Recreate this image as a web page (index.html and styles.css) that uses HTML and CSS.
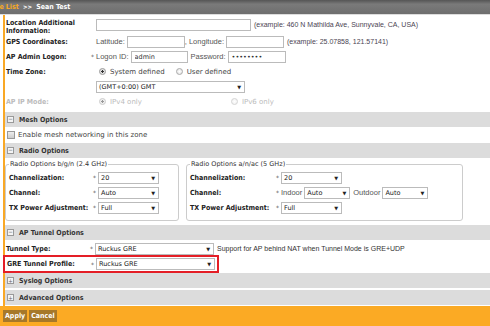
FILE: index.html
```html
<!DOCTYPE html>
<html lang="en">
	<head>
		<meta charset="UTF-8" />
		<title>Sean Test</title>
		<link rel="stylesheet" href="styles.css">
	</head>
	<body>
		<div class="topbar">
			<span class="crumb-link">Zone List</span>
			<span class="crumb-sep">&gt;&gt;</span>
			<span class="crumb-current">Sean Test</span>
		</div>

		<div class="main">
			<!-- general -->
			<div class="row row-tall">
				<span class="lbl">Location Additional Information:</span>
				<span class="req"></span>
				<input class="txt w-loc" type="text" value="">
				<span class="hint">(example: 460 N Mathilda Ave, Sunnyvale, CA, USA)</span>
			</div>
			<div class="row">
				<span class="lbl">GPS Coordinates:</span>
				<span class="req"></span>
				<span class="inline">Latitude:</span>
				<input class="txt w-gps" type="text" value="">
				<span class="inline">, Longitude:</span>
				<input class="txt w-gps" type="text" value="">
				<span class="hint">(example: 25.07858, 121.57141)</span>
			</div>
			<div class="row">
				<span class="lbl">AP Admin Logon:</span>
				<span class="req">*</span>
				<span class="inline">Logon ID:</span>
				<input class="txt w-logon" type="text" value="admin">
				<span class="inline pw-label">Password:</span>
				<input class="txt w-gps" type="password" value="********">
			</div>
			<div class="row">
				<span class="lbl">Time Zone:</span>
				<span class="req"></span>
				<span class="radio checked"></span><span class="opt">System defined</span>
				<span class="radio"></span><span class="opt">User defined</span>
			</div>
			<div class="row row-select">
				<span class="lbl"></span>
				<span class="req"></span>
				<span class="select w-tz">(GMT+0:00) GMT<i class="arrow">&#9660;</i></span>
			</div>
			<div class="row disabled">
				<span class="lbl">AP IP Mode:</span>
				<span class="req"></span>
				<span class="radio checked"></span><span class="opt ipv4">IPv4 only</span>
				<span class="radio"></span><span class="opt">IPv6 only</span>
			</div>

			<!-- mesh -->
			<div class="section-head mesh-head"><span class="toggle">&minus;</span>Mesh Options</div>
			<div class="row check-row">
				<span class="checkbox"></span><span class="opt">Enable mesh networking in this zone</span>
			</div>

			<!-- radio -->
			<div class="section-head"><span class="toggle">&minus;</span>Radio Options</div>
			<div class="radio-groups">
				<fieldset class="group group-bgn">
					<legend>Radio Options b/g/n (2.4 GHz)</legend>
					<div class="grow">
						<span class="glbl">Channelization:</span><span class="req">*</span>
						<span class="select w-small">20<i class="arrow">&#9660;</i></span>
					</div>
					<div class="grow">
						<span class="glbl">Channel:</span><span class="req">*</span>
						<span class="select w-small">Auto<i class="arrow">&#9660;</i></span>
					</div>
					<div class="grow">
						<span class="glbl">TX Power Adjustment:</span><span class="req">*</span>
						<span class="select w-small">Full<i class="arrow">&#9660;</i></span>
					</div>
				</fieldset>
				<fieldset class="group group-ac">
					<legend>Radio Options a/n/ac (5 GHz)</legend>
					<div class="grow">
						<span class="glbl">Channelization:</span><span class="req">*</span>
						<span class="select w-small">20<i class="arrow">&#9660;</i></span>
					</div>
					<div class="grow">
						<span class="glbl">Channel:</span><span class="req">*</span>
						<span class="inline">Indoor</span>
						<span class="select w-ch">Auto<i class="arrow">&#9660;</i></span>
						<span class="inline">Outdoor</span>
						<span class="select w-ch">Auto<i class="arrow">&#9660;</i></span>
					</div>
					<div class="grow">
						<span class="glbl">TX Power Adjustment:</span><span class="req">*</span>
						<span class="select w-small">Full<i class="arrow">&#9660;</i></span>
					</div>
				</fieldset>
			</div>

			<!-- tunnel -->
			<div class="section-head tunnel-head"><span class="toggle">&minus;</span>AP Tunnel Options</div>
			<div class="row tunnel-row">
				<span class="lbl">Tunnel Type:</span>
				<span class="req">*</span>
				<span class="select w-gre">Ruckus GRE<i class="arrow">&#9660;</i></span>
				<span class="hint hint-dark">Support for AP behind NAT when Tunnel Mode is GRE+UDP</span>
			</div>
			<div class="row tunnel-row highlight">
				<span class="lbl">GRE Tunnel Profile:</span>
				<span class="req">*</span>
				<span class="select w-gre">Ruckus GRE<i class="arrow">&#9660;</i></span>
			</div>

			<div class="section-head closed"><span class="toggle">+</span>Syslog Options</div>
			<div class="section-head closed adv-head"><span class="toggle">+</span>Advanced Options</div>
		</div>

		<div class="footer">
			<button class="btn">Apply</button>
			<button class="btn">Cancel</button>
		</div>
	</body>
</html>
```

FILE: styles.css
```css
body {
	margin: 0;
	width: 490px;
	height: 326px;
	overflow: hidden;
	font-family: "DejaVu Sans", sans-serif;
	font-size: 7px;
	color: #222;
	background-color: #fff;
}

/* breadcrumb bar */
.topbar {
	height: 14px;
	line-height: 13px;
	background: linear-gradient(#555, #7a7a7a 30%, #6e6e6e);
	border-bottom: 1px solid #ddd;
	color: #fff;
	font-family: "DejaVu Sans Condensed", "DejaVu Sans", sans-serif;
	font-weight: bold;
	font-size: 7px;
	white-space: nowrap;
	overflow: hidden;
}

.crumb-link {
	color: #f7a823;
	margin-left: -14px;
}

.crumb-sep {
	font-size: 6px;
	margin: 0 2px;
}

/* main column */
.main {
	margin-left: 3px;
	border-left: 2px solid #f9a825;
	padding-top: 3px;
	padding-bottom: 1px;
}

.row {
	display: flex;
	align-items: center;
	height: 15px;
	white-space: nowrap;
}

.row-tall {
	height: 16px;
	align-items: flex-start;
}

.row-tall .lbl {
	line-height: 8px;
	white-space: normal;
	padding-top: 1px;
}

.row-tall .txt {
	margin-top: 1px;
}

.row-tall .hint {
	margin-top: 3px;
}

.lbl,
.glbl {
	font-family: "DejaVu Sans Condensed", "DejaVu Sans", sans-serif;
	font-weight: bold;
	color: #222;
	flex: none;
}

.lbl {
	width: 85px;
	padding-left: 1px;
}

.req {
	width: 5px;
	flex: none;
	color: #555;
	font-size: 6px;
}

.inline {
	font-family: "Liberation Sans", sans-serif;
	font-size: 7.5px;
	color: #555;
	margin-right: 2px;
}

.pw-label {
	margin-left: 3px;
}

.hint {
	font-family: "Liberation Sans", sans-serif;
	font-size: 7px;
	color: #4a4452;
	margin-left: 3px;
}

.hint-dark {
	color: #333;
}

.txt {
	box-sizing: border-box;
	height: 12px;
	border: 1px solid #bbb;
	padding: 0 3px;
	font-family: "DejaVu Sans", sans-serif;
	font-size: 6.5px;
	color: #333;
	margin: 0;
	outline: none;
}

.w-loc {
	width: 155px;
}

.w-gps {
	width: 58px;
}

.w-logon {
	width: 57px;
}

/* radio & checkbox */
.radio {
	width: 7px;
	height: 7px;
	border-radius: 50%;
	border: 1px solid #aaa;
	background: radial-gradient(#fff, #ddd);
	margin: 0 4px 0 3px;
	box-sizing: border-box;
	flex: none;
}

.radio.checked {
	background: radial-gradient(#333 30%, #ddd 40%, #eee);
	border-color: #999;
}

.opt {
	font-size: 7px;
	color: #444;
	margin-right: 8px;
}

.disabled .lbl,
.disabled .opt {
	color: #bbb;
}

.disabled .radio {
	opacity: 0.5;
}

.disabled .ipv4 {
	margin-right: 86px;
}

.check-row {
	height: 16px;
}

.checkbox {
	width: 8px;
	height: 8px;
	border: 1px solid #999;
	background: linear-gradient(#eee, #ccc);
	box-sizing: border-box;
	margin: 0 3px 0 2px;
}

/* select look-alike */
.select {
	box-sizing: border-box;
	display: flex;
	align-items: center;
	justify-content: space-between;
	height: 12px;
	padding: 0 3px 0 2px;
	border: 1px solid #bbb;
	background-color: #fff;
	font-size: 6.5px;
	color: #222;
	flex: none;
}

.arrow {
	font-style: normal;
	font-size: 5px;
	color: #222;
}

.w-tz {
	width: 149px;
}

.w-small {
	width: 61px;
}

.w-ch {
	width: 46px;
	margin-right: 3px;
}

.w-gre {
	width: 119px;
}

/* section headers */
.section-head {
	display: flex;
	align-items: center;
	height: 15px;
	background-color: #dcdcdc;
	font-family: "DejaVu Sans Condensed", "DejaVu Sans", sans-serif;
	font-weight: bold;
	font-size: 7px;
	color: #333;
}

.toggle {
	box-sizing: border-box;
	width: 7px;
	height: 7px;
	border: 1px solid #999;
	margin: 0 5px 0 2px;
	font-size: 6px;
	line-height: 4px;
	text-align: center;
	color: #666;
	font-weight: normal;
	background-color: #f4f4f4;
}

.closed .toggle {
	line-height: 5px;
}

.mesh-head {
	margin-top: 3px;
}

.tunnel-head {
	margin-top: 4px;
}

.adv-head {
	margin-top: 2px;
}

/* fieldset groups */
.radio-groups {
	display: flex;
	gap: 7px;
	padding-top: 2px;
}

.group {
	margin: 0;
	padding: 2px 3px 5px 3px;
	border: 1px solid #ccc;
	border-radius: 3px;
}

.group legend {
	padding: 0 1px;
	font-size: 6.5px;
	color: #333;
}

.group-bgn {
	width: 166px;
}

.group-ac {
	width: 269px;
}

.grow {
	display: flex;
	align-items: center;
	height: 15px;
	white-space: nowrap;
}

.glbl {
	width: 84px;
}

.group-ac .glbl {
	width: 86px;
}

/* tunnel */
.tunnel-row {
	height: 13px;
}

.tunnel-row .lbl {
	width: 84px;
}

.tunnel-head + .tunnel-row {
	margin-top: 2px;
}

.highlight {
	height: 14px;
	width: 211px;
	margin-left: -2px;
	padding-left: 1px;
	border: 2px solid #e41e26;
}

/* footer */
.footer {
	height: 20px;
	display: flex;
	align-items: center;
	gap: 2px;
	padding-left: 3px;
	background-color: #fbaa24;
}

.btn {
	height: 12px;
	padding: 0 2px;
	border: none;
	background-color: #a6782a;
	color: #fff;
	font-family: "DejaVu Sans Condensed", "DejaVu Sans", sans-serif;
	font-weight: bold;
	font-size: 7px;
	cursor: pointer;
}
```
